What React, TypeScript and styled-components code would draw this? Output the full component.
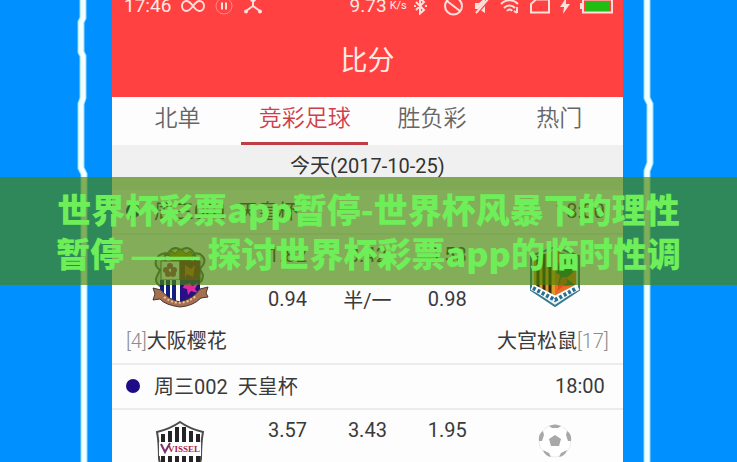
import React from "react";
import styled, { createGlobalStyle } from "styled-components";

const latinCjk = `Roboto, "Noto Sans CJK SC", sans-serif`;

const GlobalStyle = createGlobalStyle`
  * { box-sizing: border-box; }
  body { margin: 0; background: #0090ff; font-family: ${latinCjk}; }
`;

const Page = styled.main`
  position: relative;
  display: grid;
  grid-template-columns: 15.2% 1fr 15.5%;
  height: 100vh;
  overflow: hidden;
  background: #0090ff;
`;

const Side = styled.div<{ $end?: boolean }>`
  display: flex;
  justify-content: ${(p) => (p.$end ? "flex-start" : "flex-end")};
`;

const Screen = styled.section`
  background: #fdfdfd;
  min-width: 0;
`;

const Header = styled.header`
  background: #ff4141;
  color: #ffe9e4;
  height: 97px;
`;

const StatusBar = styled.div`
  display: flex;
  justify-content: space-between;
  align-items: center;
  height: 12px;
  padding: 0 10px 0 12px;
  font-size: 19px;
  line-height: 12px;
`;

const StatusGroup = styled.div`
  display: flex;
  align-items: center;
  gap: 10px;
`;

const Speed = styled.span`
  display: flex;
  align-items: center;
  gap: 3px;
  margin-right: 6px;
  small { font-size: 11px; margin-right: 4px; }
`;

const Title = styled.h1`
  margin: 0;
  padding-top: 29px;
  text-align: center;
  font-size: 27px;
  line-height: 40px;
  font-weight: 400;
`;

const Tabs = styled.nav`
  display: grid;
  grid-template-columns: repeat(4, 1fr);
  height: 48px;
  padding-left: 2px;
`;

const Tab = styled.button<{ $active?: boolean }>`
  border: 0;
  border-bottom: 3px solid ${(p) => (p.$active ? "#bd3f45" : "transparent")};
  background: none;
  padding: 0 0 8px;
  font-family: "Noto Sans CJK SC", sans-serif;
  font-size: 23px;
  font-weight: 350;
  color: ${(p) => (p.$active ? "#cf3f4a" : "#666")};
`;

const DateRow = styled.div`
  height: 45px;
  background: #f0f0f0;
  text-align: center;
  font-size: 20px;
  line-height: 42px;
  color: #333;
`;

const MatchHead = styled.div`
  display: flex;
  align-items: center;
  height: 45px;
  padding: 0 18px 2px 14px;
  border-bottom: 2px solid #ececec;
  font-size: 20px;
  color: #3a3a3a;
`;

const Dot = styled.span`
  width: 14px;
  height: 14px;
  margin-right: 14px;
  border-radius: 50%;
  background: #1d0c86;
`;

const League = styled.span`
  margin-left: 10px;
`;

const Time = styled.time`
  margin-left: auto;
`;

const Match = styled.article`
  height: 130px;
  border-bottom: 2px solid #ececec;
`;

const Odds = styled.div`
  display: grid;
  grid-template-columns: 17fr 10fr 10fr 10fr 17fr;
  grid-template-rows: 40px 40px;
  row-gap: 4px;
  align-items: center;
  justify-items: center;
  font-size: 20px;
  color: #3a3a3a;
`;

const Badge = styled.div<{ $column: number }>`
  grid-row: 1 / span 2;
  grid-column: ${(p) => p.$column};
  display: flex;
`;

const Teams = styled.div`
  display: flex;
  justify-content: space-between;
  padding: 0 14px;
  font-size: 20px;
  line-height: 44px;
  color: #3a3a3a;
`;

const Rank = styled.span`
  color: #8c8c8c;
  font-weight: 300;
`;

const Banner = styled.h2`
  position: absolute;
  top: 177px;
  left: 0;
  right: 0;
  margin: 0;
  padding: 10px 48px;
  background: rgba(70, 132, 5, 0.66);
  color: #6eee58;
  text-align: center;
  font-family: "Noto Sans CJK SC", sans-serif;
  font-size: 34px;
  font-weight: 900;
  line-height: 44px;
`;

const BannerLine = styled.span`
  display: block;
  white-space: nowrap;
`;

const Dash = styled.span`
  font-family: "Liberation Sans", sans-serif;
  line-height: 1;
`;

const leftEdge = "M7 0V18L5 22V52L7 56V98L5 104V168L8 174V462";
const rightEdge = "M24 0V98L27 104V163L24 171V462";

const Edge = ({ d }: { d: string }) => (
  <svg width="36" height="462" viewBox="0 0 36 462" fill="none">
    <path d={d} stroke="#8fdcff" strokeWidth="7" />
    <path d={d} stroke="#f4ffff" strokeWidth="5" />
  </svg>
);

const line = { fill: "none", stroke: "#ffe0da", strokeWidth: 2 } as const;

const Infinity8 = () => (
  <svg width="24" height="14" viewBox="0 0 24 14" {...line}>
    <path d="M12 7C9 3 7 2 5.500 2a4.500 5 0 0 0 0 10C7.500 12 9 11 12 7s4.500-5 6.500-5a4.500 5 0 0 1 0 10C17 12 15 11 12 7Z" />
  </svg>
);
const Pause = () => (
  <svg width="18" height="18" viewBox="0 0 18 18" {...line}>
    <circle cx="9" cy="9" r="8" strokeWidth="1" stroke="#ff8a80" />
    <path d="M7 5.500v7M11 5.500v7" />
  </svg>
);
const Share = () => (
  <svg width="20" height="18" viewBox="0 0 20 18" {...line}>
    <path d="M10 1v9M10 9l-7 5M10 9l7 5" />
    <g fill="#ffe0da" stroke="none">
      <circle cx="10" cy="2" r="3" />
      <circle cx="3" cy="14.500" r="2" />
      <circle cx="17" cy="14.500" r="2" />
    </g>
  </svg>
);
const Bluetooth = () => (
  <svg width="13" height="18" viewBox="0 0 13 18" {...line}>
    <path d="M2 5l8 8-4 3.500V1.500L10 5l-8 8M0 9h2M11 9h2" />
  </svg>
);
const Ban = () => (
  <svg width="21" height="20" viewBox="0 0 21 20" {...line}>
    <circle cx="10.500" cy="10" r="8.500" />
    <path d="M4 5l13 10" />
  </svg>
);
const Mute = () => (
  <svg width="16" height="18" viewBox="0 0 16 18">
    <path d="M1 6h4l6-5v15l-6-4H1z" fill="#ffe0da" />
    <path d="M15 2L2 17" stroke="#ff4141" strokeWidth="3" />
    <path d="M15 1L2 16" stroke="#ffe0da" strokeWidth="2" />
  </svg>
);
const Wifi = () => (
  <svg width="20" height="16" viewBox="0 0 20 16" {...line}>
    <path d="M1 6c5-5 12-5 17 0M4 10c3-3.500 8-3.500 11 0M7 13c1.500-2 4-2 5 0" />
    <path d="M17 9v6M14 13l3 2" />
  </svg>
);
const Sim = () => (
  <svg width="20" height="16" viewBox="0 0 20 16" {...line}>
    <path d="M1 14.500V6l5-4.500h13v13z" />
  </svg>
);
const Bolt = () => (
  <svg width="10" height="16" viewBox="0 0 10 16">
    <path d="M6 0L0 9h4l-1 7 7-10H6z" fill="#ffe0da" />
  </svg>
);
const Battery = () => (
  <svg width="33" height="16" viewBox="0 0 33 16" {...line}>
    <path d="M3 1.500h29v13H3zM1 5v6" />
    <path d="M5 3h25v10H5z" fill="#21bd12" stroke="none" />
  </svg>
);

const Cerezo = () => (
  <svg width="60" height="62" viewBox="0 0 60 62">
    <path d="M18 7q6-8 13-3q8-5 13 3l6 1q7 5 3 11l-3 4 3 6q0 6-4 8l-4-2V9H15v28l-5 3q-6-4-3-10l3-6q-7-5-3-12 3-5 11-5z" fill="#d7d9d0" stroke="#655c58" strokeWidth="2" />
    <path d="M19 9q3-7 6-1 5-9 11 0 5-6 7 2l-3 5H22z" fill="#b08b1d" stroke="#665720" />
    <path d="M11 15h19v19H11z" fill="#f8f7f8" stroke="#555" />
    <path d="M30 15h20v19H30z" fill="#8c1938" stroke="#444" />
    <path d="M11 34h19v24Q15 53 11 43z" fill="#fff" />
    <path d="M12 34v13M18 34v19M24 34v22" stroke="#141f82" strokeWidth="4" />
    <path d="M30 34h20v9Q45 53 30 58z" fill="#251087" />
    <g fill="#b33c65">
      <circle cx="20" cy="20" r="3" /><circle cx="16" cy="24" r="3" /><circle cx="24" cy="24" r="3" /><circle cx="18" cy="28" r="3" /><circle cx="23" cy="28" r="3" />
    </g>
    <path d="M35 19l6 4 4-4-2 12-6-3-2 4z" fill="#d8552a" />
    <path d="M34 39l6-2 2 3 6-3-3 6 3 4-7-2-3 4-1-6-4-1z" fill="#dc2a9a" />
    <path d="M3 42l8 2q8 10 19 12 13-3 20-13l8-2-2 6 2 4-7 1Q43 60 30 61 15 59 10 53l-7 1 2-6z" fill="#a56f51" stroke="#49362f" />
    <path d="M14 51q16 12 32-1" stroke="#efc29a" strokeWidth="2" strokeDasharray="2 2" fill="none" />
  </svg>
);

const Omiya = () => (
  <svg width="52" height="60" viewBox="0 0 52 60">
    <path d="M2 9L26 0l24 9v34L26 59 2 43z" fill="#e8f1ef" stroke="#37798e" strokeWidth="2" />
    <path d="M5 11L26 3v46L5 39z" fill="#e29b22" />
    <path d="M9 9v32M15 7v37M21 5v42" stroke="#34291d" strokeWidth="3" />
    <path d="M26 3l21 8v28L26 49z" fill="#eb6b24" />
    <path d="M30 16q12-9 16 1 1 9-9 14l9 7-17 1 2-11-4-2z" fill="#176b3d" />
    <path d="M32 31q7-4 6 5l-10 8z" fill="#e04c23" />
    <path d="M3 40l23 12 23-12" fill="none" stroke="#fff" strokeWidth="6" />
    <path d="M4 41l22 12 22-12" fill="none" stroke="#276f96" strokeWidth="4" strokeDasharray="3 2" />
  </svg>
);

const Vissel = () => (
  <svg width="50" height="62" viewBox="0 0 50 62">
    <path d="M2 11Q15 8 25 1q10 7 23 10-2 10-2 27Q43 53 25 61 7 53 4 38 4 21 2 11z" fill="#fff" stroke="#4d4d4d" strokeWidth="2" />
    <path d="M8 13v34M15 10v42M22 6v51M29 6v51M36 10v42M43 13v32" stroke="#262326" strokeWidth="4" />
    <path d="M4 21h42v14H4z" fill="#fff" />
    <path d="M6 23l4 8 5-9" fill="none" stroke="#76316f" strokeWidth="2" />
    <text x="13" y="31" fontFamily="Liberation Serif" fontWeight="700" fontSize="9" fill="#ad2142">VISSEL</text>
  </svg>
);

const Ball = () => (
  <svg width="36" height="58" viewBox="0 0 36 58">
    <circle cx="18" cy="18" r="16" fill="#fff" stroke="#ececec" />
    <g fill="#a8a8a8">
      <path d="M18 12l6 4-2 7h-8l-2-7z" />
      <path d="M12 3q6-3 12 0l-3 2h-6zM2 18q-1-7 4-10l1 4-2 6zM34 18q1-7-4-10l-1 4 2 6zM6 27l6 3 2 4q-6-1-8-7zM30 27l-6 3-2 4q6-1 8-7z" />
    </g>
  </svg>
);

const tabs = ["北单", "竞彩足球", "胜负彩", "热门"];

type Game = {
  no: string;
  odds: string[];
  handicap?: string[];
  home?: [string, string];
  away?: [string, string];
  homeBadge: React.ReactNode;
  awayBadge: React.ReactNode;
};

const games: Game[] = [
  {
    no: "周三001",
    odds: ["1.82", "3.42", "3.58"],
    handicap: ["0.94", "半/一", "0.98"],
    home: ["[4]", "大阪樱花"],
    away: ["大宫松鼠", "[17]"],
    homeBadge: <Cerezo />,
    awayBadge: <Omiya />,
  },
  {
    no: "周三002",
    odds: ["3.57", "3.43", "1.95"],
    homeBadge: <Vissel />,
    awayBadge: <Ball />,
  },
];

export default function App() {
  return (
    <Page lang="zh-CN">
      <GlobalStyle />
      <Side><Edge d={leftEdge} /></Side>
      <Screen>
        <Header>
          <StatusBar>
            <StatusGroup>
              <span>17:46</span>
              <Infinity8 />
              <Pause />
              <Share />
            </StatusGroup>
            <StatusGroup>
              <Speed>9.73<small>K/s</small><Bluetooth /></Speed>
              <Ban />
              <Mute />
              <Wifi />
              <Sim />
              <Bolt />
              <Battery />
            </StatusGroup>
          </StatusBar>
          <Title>比分</Title>
        </Header>
        <Tabs>
          {tabs.map((t, i) => (
            <Tab key={t} type="button" $active={i === 1}>{t}</Tab>
          ))}
        </Tabs>
        <DateRow>今天(2017-10-25)</DateRow>
        {games.map((g) => (
          <React.Fragment key={g.no}>
            <MatchHead>
              <Dot />
              <span>{g.no}</span>
              <League>天皇杯</League>
              <Time>18:00</Time>
            </MatchHead>
            <Match>
              <Odds>
                <Badge $column={1}>{g.homeBadge}</Badge>
                <Badge $column={5}>{g.awayBadge}</Badge>
                {g.odds.map((o) => <span key={o}>{o}</span>)}
                {g.handicap?.map((h) => <span key={h}>{h}</span>)}
              </Odds>
              {g.home && g.away && (
                <Teams>
                  <span><Rank>{g.home[0]}</Rank>{g.home[1]}</span>
                  <span>{g.away[0]}<Rank>{g.away[1]}</Rank></span>
                </Teams>
              )}
            </Match>
          </React.Fragment>
        ))}
      </Screen>
      <Side $end><Edge d={rightEdge} /></Side>
      <Banner>
        <BannerLine>世界杯彩票app暂停-世界杯风暴下的理性</BannerLine>
        <BannerLine>暂停 <Dash>——</Dash> 探讨世界杯彩票app的临时性调</BannerLine>
      </Banner>
    </Page>
  );
}
